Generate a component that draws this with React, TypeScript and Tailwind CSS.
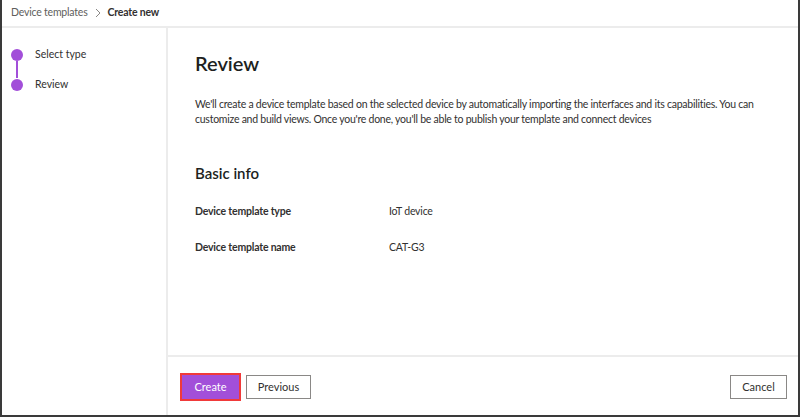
export default function App() {
    const font = { fontFamily: "'Lato', 'Liberation Sans', sans-serif" }

    return (
        <div className="w-[800px] h-[417px] bg-white flex flex-col border-x-2 border-b-2 border-[#3a3a3a] text-[#323130]" style={font}>
            <div className="h-[28px] flex items-center gap-[6px] px-[9px] border-b-2 border-[#ececec] text-[10.5px] tracking-[-0.2px] shrink-0">
                <span className="text-[#605e5c]">Device templates</span>
                <svg width="8" height="10" viewBox="0 0 8 10">
                    <path d="M2 1l4 4-4 4" fill="none" stroke="#8a8886" strokeWidth="1" />
                </svg>
                <span className="font-bold text-[#323130]">Create new</span>
            </div>

            <div className="flex flex-1 min-h-0">
                <div className="w-[166px] shrink-0 border-r-2 border-[#ececec] pt-[20px] pl-[9px]">
                    <div className="flex items-center h-[13px]">
                        <div className="w-[12px] h-[12px] rounded-full bg-[#a24fd9]" />
                        <span className="ml-[12px] text-[10.5px] text-[#323130]">Select type</span>
                    </div>
                    <div className="w-[2px] h-[17px] bg-[#a24fd9] ml-[5px]" />
                    <div className="flex items-center h-[13px]">
                        <div className="w-[12px] h-[12px] rounded-full bg-[#a24fd9]" />
                        <span className="ml-[12px] text-[10.5px] text-[#323130]">Review</span>
                    </div>
                </div>

                <div className="flex-1 flex flex-col min-w-0">
                    <div className="flex-1 pl-[27px] pr-[16px] pt-[21px]">
                        <h1 className="text-[20px] font-semibold text-[#201f1e] leading-[28px]">Review</h1>
                        <p className="mt-[20px] text-[10.5px] tracking-[-0.25px] leading-[15px] text-[#323130]">
                            We'll create a device template based on the selected device by automatically importing the interfaces and its capabilities. You can customize and build views. Once you're done, you'll be able to publish your template and connect devices
                        </p>
                        <h2 className="mt-[36px] text-[15px] font-semibold text-[#201f1e] leading-[20px]">Basic info</h2>
                        <div className="mt-[21px] flex text-[10.5px] tracking-[-0.2px] leading-[15px]">
                            <span className="w-[194px] font-bold text-[#323130]">Device template type</span>
                            <span>IoT device</span>
                        </div>
                        <div className="mt-[21px] flex text-[10.5px] tracking-[-0.2px] leading-[15px]">
                            <span className="w-[194px] font-bold text-[#323130]">Device template name</span>
                            <span>CAT-G3</span>
                        </div>
                    </div>

                    <div className="h-[60px] shrink-0 border-t-2 border-[#ececec] flex items-center pl-[13px] pr-[11px] pt-[2px]">
                        <button className="h-[26px] w-[59px] bg-[#a24fd9] text-white text-[11px] outline-2 outline-[#f03a3a] -outline-offset-1">
                            Create
                        </button>
                        <button className="ml-[6px] h-[24px] w-[65px] border border-[#8a8886] text-[11px] text-[#323130]">
                            Previous
                        </button>
                        <button className="ml-auto h-[24px] w-[57px] border border-[#8a8886] text-[11px] text-[#323130]">
                            Cancel
                        </button>
                    </div>
                </div>
            </div>
        </div>
    )
}
